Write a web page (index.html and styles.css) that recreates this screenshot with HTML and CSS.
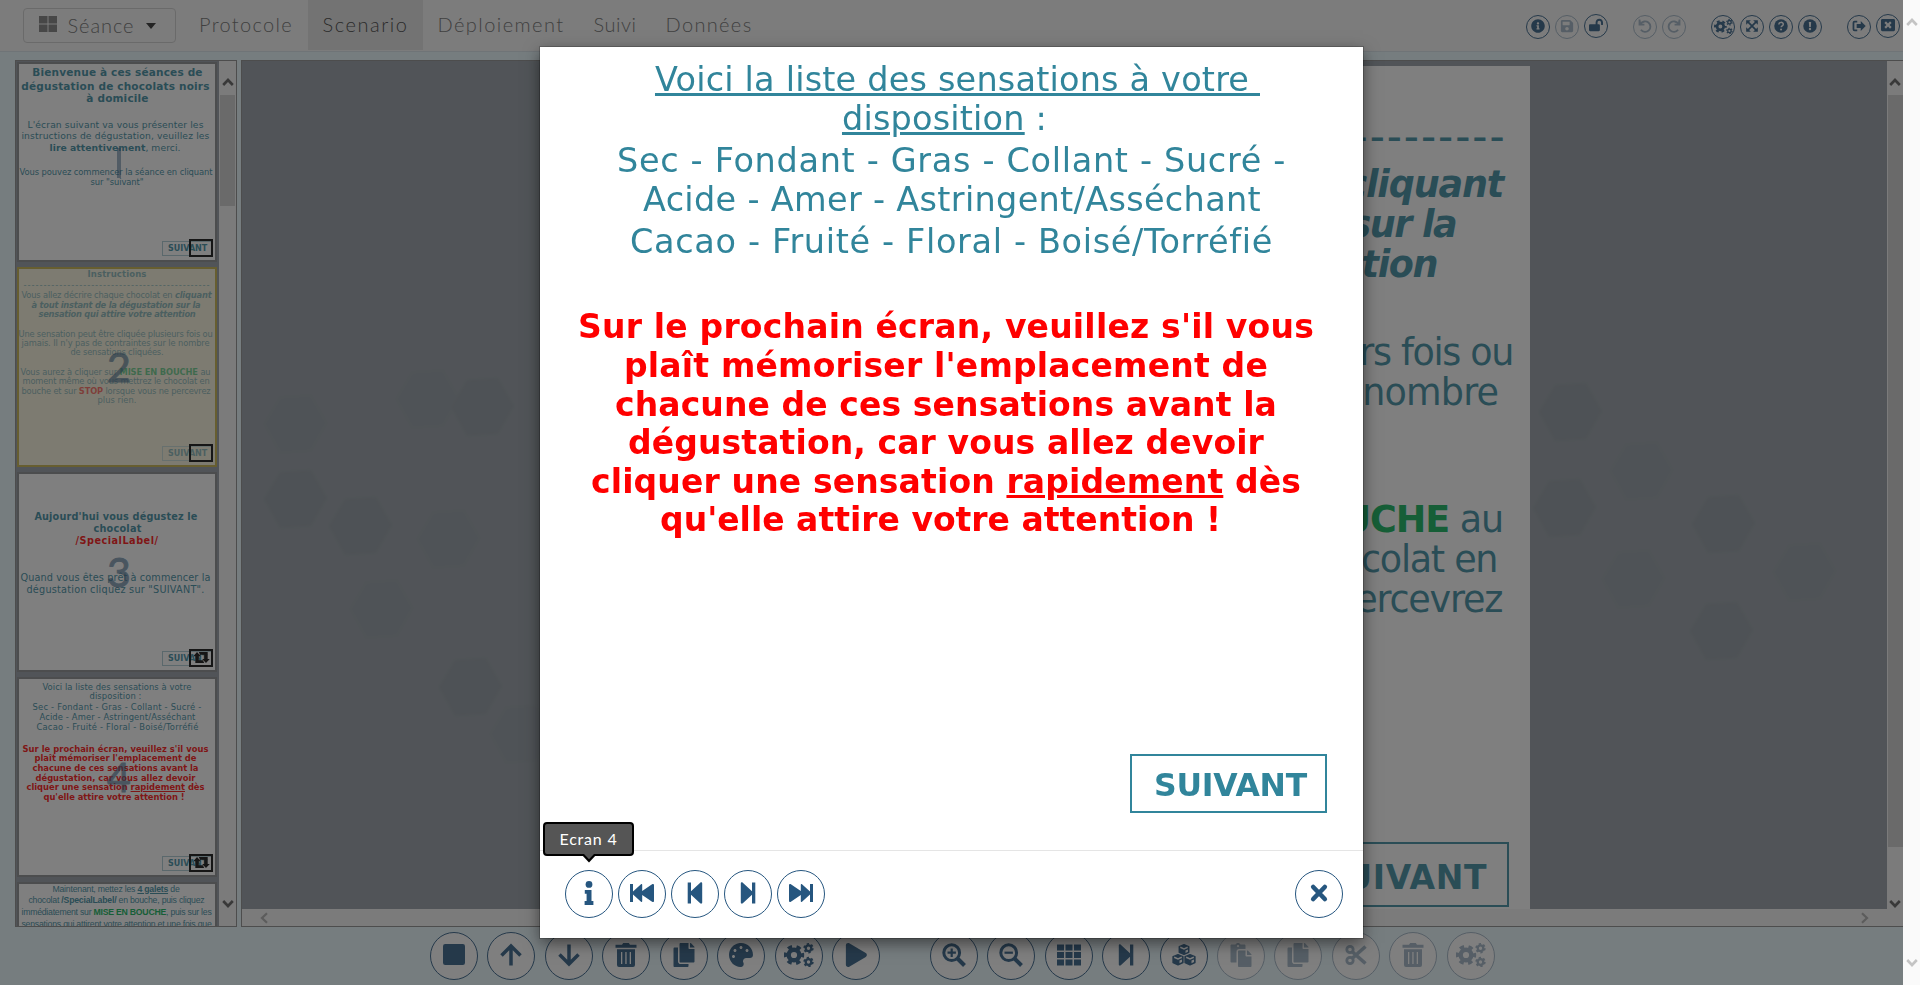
FILE: index.html
```html
<!DOCTYPE html>
<html lang="fr">
<head>
<meta charset="utf-8">
<title>Scenario</title>
<link rel="stylesheet" href="styles.css">
</head>
<body>
<svg class="defs" aria-hidden="true">
  <symbol id="info-circle" viewBox="0 0 512 512"><path d="M256 8C119.043 8 8 119.083 8 256c0 136.997 111.043 248 248 248s248-111.003 248-248C504 119.083 392.957 8 256 8zm0 110c23.196 0 42 18.804 42 42s-18.804 42-42 42-42-18.804-42-42 18.804-42 42-42zm56 254c0 6.627-5.373 12-12 12h-88c-6.627 0-12-5.373-12-12v-24c0-6.627 5.373-12 12-12h12v-64h-12c-6.627 0-12-5.373-12-12v-24c0-6.627 5.373-12 12-12h64c6.627 0 12 5.373 12 12v100h12c6.627 0 12 5.373 12 12v24z"/></symbol>
  <symbol id="save" viewBox="-32 0 512 512"><path d="M433.941 129.941l-83.882-83.882A48 48 0 0 0 316.118 32H48C21.49 32 0 53.49 0 80v352c0 26.51 21.49 48 48 48h352c26.51 0 48-21.49 48-48V163.882a48 48 0 0 0-14.059-33.941zM224 416c-35.346 0-64-28.654-64-64 0-35.346 28.654-64 64-64s64 28.654 64 64c0 35.346-28.654 64-64 64zm96-304.52V212c0 6.627-5.373 12-12 12H76c-6.627 0-12-5.373-12-12V108c0-6.627 5.373-12 12-12h228.52c3.183 0 6.235 1.264 8.485 3.515l3.48 3.48A11.996 11.996 0 0 1 320 111.48z"/></symbol>
  <symbol id="lock-open" viewBox="0 0 576 512"><path d="M423.5 0C339.5.3 272 69.5 272 153.5V224H48c-26.5 0-48 21.5-48 48v192c0 26.5 21.5 48 48 48h352c26.5 0 48-21.5 48-48V272c0-26.5-21.5-48-48-48h-48v-71.1c0-39.6 31.7-72.5 71.3-72.9 40-.4 72.7 32.1 72.7 72v80c0 13.3 10.7 24 24 24h32c13.3 0 24-10.7 24-24v-80C576 68 507.5-.3 423.5 0z"/></symbol>
  <symbol id="undo" viewBox="0 0 24 24"><path d="M4.500 8.500A9 9 0 1 1 5 18.500" fill="none" stroke="currentColor" stroke-width="3.200"/><path d="M1 1v10h10V8H5.500L4 1z"/></symbol>
  <symbol id="redo" viewBox="0 0 24 24"><path d="M19.500 8.500A9 9 0 1 0 19 18.500" fill="none" stroke="currentColor" stroke-width="3.200"/><path d="M23 1v10H13V8h5.500L20 1z"/></symbol>
  <symbol id="cogs" viewBox="0 0 30 24">
    <g fill="none" stroke="currentColor"><circle cx="10" cy="12" r="5.300" stroke-width="4.400"/><circle cx="10" cy="12" r="8.500" stroke-width="3.400" stroke-dasharray="4.450 4.450" stroke-dashoffset="2.200"/>
    <circle cx="24.500" cy="5.200" r="2.800" stroke-width="2.200"/><circle cx="24.500" cy="5.200" r="4.300" stroke-width="1.800" stroke-dasharray="2.250 2.250"/>
    <circle cx="24.500" cy="19" r="2.800" stroke-width="2.200"/><circle cx="24.500" cy="19" r="4.300" stroke-width="1.800" stroke-dasharray="2.250 2.250"/></g></symbol>
  <symbol id="expand" viewBox="0 0 24 24"><path d="M5 5l14 14M19 5L5 19" stroke="currentColor" stroke-width="3"/><path d="M2 2h8L2 10zM22 2v8l-8-8zM2 22v-8l8 8zM22 22h-8l8-8z"/></symbol>
  <symbol id="question" viewBox="0 0 24 24"><circle cx="12" cy="12" r="11.600"/><path d="M8.300 9.500c0-5 7.600-4.800 7.600-.6 0 2.800-3.700 2.700-3.700 5.300" fill="none" stroke="#fff" stroke-width="2.500"/><circle cx="12.100" cy="18" r="1.800" fill="#fff"/></symbol>
  <symbol id="exclamation" viewBox="0 0 24 24"><circle cx="12" cy="12" r="11.600"/><path d="M10 5h4l-.6 8.500h-2.800z" fill="#fff"/><circle cx="12" cy="17.200" r="2" fill="#fff"/></symbol>
  <symbol id="sign-out" viewBox="0 0 24 24"><path d="M9 4.500H4.500a2 2 0 0 0-2 2v11a2 2 0 0 0 2 2H9" fill="none" stroke="currentColor" stroke-width="3"/><path d="M15 3.500l8.500 8.500-8.500 8.500v-5H8v-7h7z"/></symbol>
  <symbol id="window-close" viewBox="0 0 512 512"><path d="M464 32H48C21.500 32 0 53.500 0 80v352c0 26.500 21.500 48 48 48h416c26.500 0 48-21.500 48-48V80c0-26.500-21.500-48-48-48zm-83.600 290.500c4.800 4.800 4.800 12.600 0 17.400l-40.500 40.500c-4.800 4.800-12.600 4.800-17.400 0L256 313.300l-66.500 67.100c-4.800 4.800-12.600 4.800-17.400 0l-40.500-40.500c-4.800-4.800-4.800-12.600 0-17.400l67.100-66.500-67.100-66.500c-4.800-4.800-4.800-12.600 0-17.400l40.500-40.500c4.800-4.800 12.600-4.800 17.400 0l66.500 67.100 66.500-67.100c4.800-4.800 12.600-4.800 17.400 0l40.500 40.500c4.800 4.800 4.800 12.600 0 17.400L313.300 256l67.100 66.500z"/></symbol>
  <symbol id="square" viewBox="0 0 24 24"><rect x="1" y="1" width="22" height="21" rx="2.200"/></symbol>
  <symbol id="arrow-up" viewBox="0 0 24 24"><path d="M12 22.500V4M2.500 12.500L12 3l9.500 9.500" fill="none" stroke="currentColor" stroke-width="3.500"/></symbol>
  <symbol id="arrow-down" viewBox="0 0 24 24"><path d="M12 1.500V20M2.500 11.500L12 21l9.500-9.500" fill="none" stroke="currentColor" stroke-width="3.500"/></symbol>
  <symbol id="trash" viewBox="0 0 24 24"><path d="M1.500 1.700H8L9.200 0h5.600L16 1.700h6.500v3h-21z"/><path fill-rule="evenodd" d="M3 6.200h18V22a2 2 0 0 1-2 2H5a2 2 0 0 1-2-2zM7 9v12h1.300V9zm4.300 0v12h1.300V9zm4.400 0v12H17V9z"/></symbol>
  <symbol id="copy" viewBox="-32 0 512 512"><path d="M320 448v40c0 13.255-10.745 24-24 24H24c-13.255 0-24-10.745-24-24V120c0-13.255 10.745-24 24-24h72v296c0 30.879 25.121 56 56 56h168zm0-344V0H152c-13.255 0-24 10.745-24 24v368c0 13.255 10.745 24 24 24h272c13.255 0 24-10.745 24-24V128H344c-13.200 0-24-10.800-24-24zm120.971-31.029L375.029 7.029A24 24 0 0 0 358.059 0H352v96h96v-6.059a24 24 0 0 0-7.029-16.970z"/></symbol>
  <symbol id="palette" viewBox="0 0 512 512"><path d="M204.300 5C104.900 24.400 24.800 104.300 5.200 203.400c-37 187 131.700 326.400 258.800 306.700 41.200-6.400 61.400-54.600 42.500-91.700-23.100-45.400 9.900-98.400 60.900-98.400h79.700c35.800 0 64.800-29.600 64.900-65.300C511.500 97.100 368.100-26.900 204.300 5zM96 320c-17.700 0-32-14.300-32-32s14.300-32 32-32 32 14.300 32 32-14.300 32-32 32zm32-128c-17.700 0-32-14.300-32-32s14.300-32 32-32 32 14.300 32 32-14.300 32-32 32zm128-64c-17.700 0-32-14.300-32-32s14.300-32 32-32 32 14.300 32 32-14.300 32-32 32zm128 64c-17.700 0-32-14.300-32-32s14.300-32 32-32 32 14.300 32 32-14.300 32-32 32z"/></symbol>
  <symbol id="play" viewBox="-40 0 512 512"><path d="M424.400 214.700L72.400 6.600C43.800-10.300 0 6.100 0 47.900V464c0 37.500 40.700 60.100 72.400 41.300l352-208c31.400-18.500 31.500-64.100 0-82.600z"/></symbol>
  <symbol id="zoom-in" viewBox="0 0 24 24"><circle cx="9.700" cy="9.700" r="7.900" fill="none" stroke="currentColor" stroke-width="3"/><path d="M15.500 15.500l7 7" stroke="currentColor" stroke-width="4"/><path d="M5.500 9.700h8.400M9.700 5.500v8.400" stroke="currentColor" stroke-width="2.200"/></symbol>
  <symbol id="zoom-out" viewBox="0 0 24 24"><circle cx="9.700" cy="9.700" r="7.900" fill="none" stroke="currentColor" stroke-width="3"/><path d="M15.500 15.500l7 7" stroke="currentColor" stroke-width="4"/><path d="M5.500 9.700h8.400" stroke="currentColor" stroke-width="2.200"/></symbol>
  <symbol id="grid" viewBox="0 0 24 24"><path d="M0 1.500h7v6H0zM8.500 1.500h7v6h-7zM17 1.500h7v6h-7zM0 9h7v6H0zM8.500 9h7v6h-7zM17 9h7v6h-7zM0 16.500h7v6H0zM8.500 16.500h7v6h-7zM17 16.500h7v6h-7z"/></symbol>
  <symbol id="step-next" viewBox="0 0 24 24"><path d="M4.800 2.500c0-1 1-1.700 2-.8L16 10.300V1.600h3.300v20.800H16v-8.700L6.800 22.300c-1 .9-2 .2-2-.8z"/></symbol>
  <symbol id="step-prev" viewBox="0 0 24 24"><path d="M19.200 2.500c0-1-1-1.700-2-.8L8 10.300V1.600H4.700v20.800H8v-8.700l9.200 8.600c1 .9 2 .2 2-.8z"/></symbol>
  <symbol id="first" viewBox="0 0 24 24"><path d="M0 3h3v7.500l8-7.300c.6-.5 1.200-.2 1.200.6v6.300l9.900-6.900c.9-.5 1.900-.2 1.900.6v16.400c0 .8-1 1.100-1.900.6l-9.900-6.900v6.300c0 .8-.6 1.100-1.200.6L3 13.500V21H0z"/></symbol>
  <symbol id="last" viewBox="0 0 24 24"><path d="M24 3h-3v7.500l-8-7.300c-.6-.5-1.200-.2-1.200.6v6.300L1.900 3.200C1 2.700 0 3 0 3.800v16.400c0 .8 1 1.100 1.900.6l9.900-6.900v6.300c0 .8.600 1.100 1.200.6l8-7.300V21h3z"/></symbol>
  <symbol id="cubes" viewBox="0 0 24 24"><g stroke="currentColor" stroke-width="1.500" stroke-linejoin="round"><path d="M12 1.800l4.700 2v5.400L12 11.400 7.300 9.200V3.800z"/><path d="M6 11.800l4.900 2v5.700L6 21.700l-4.900-2.200v-5.700zM18 11.800l4.900 2v5.700L18 21.700l-4.900-2.200v-5.700z"/></g><path d="M8.300 4.300L12 5.900l3.700-1.600M2.200 14.300L6 16l3.800-1.700M14.200 14.300L18 16l3.800-1.700" fill="none" stroke="#fff" stroke-width="1.500"/><path d="M13.500 7.500l2.500-1v2.200l-2.500 1.200zM7.500 17.600l2.500-1v2.400l-2.500 1.200zM19.500 17.600l2.500-1v2.400l-2.500 1.200z" fill="#fff"/></symbol>
  <symbol id="paste" viewBox="-32 0 512 512"><path d="M128 184c0-30.879 25.122-56 56-56h136V56c0-13.255-10.745-24-24-24h-80.610C204.306 12.890 183.637 0 160 0s-44.306 12.890-55.390 32H24C10.745 32 0 42.745 0 56v336c0 13.255 10.745 24 24 24h104V184zm32-144c13.255 0 24 10.745 24 24s-10.745 24-24 24-24-10.745-24-24 10.745-24 24-24zm184 248h104v200c0 13.255-10.745 24-24 24H184c-13.255 0-24-10.745-24-24V184c0-13.255 10.745-24 24-24h136v104c0 13.200 10.800 24 24 24zm104-38.059V256h-96v-96h6.059a24 24 0 0 1 16.970 7.029l65.941 65.941a24.002 24.002 0 0 1 7.030 16.971z"/></symbol>
  <symbol id="cut" viewBox="0 0 24 24"><g fill="none" stroke="currentColor"><circle cx="6" cy="6.500" r="3.200" stroke-width="2.800"/><circle cx="6" cy="17.500" r="3.200" stroke-width="2.800"/><path d="M8 8.500L21.500 20.500M8 15.500L21.500 3.500" stroke-width="3.600"/></g></symbol>
  <symbol id="info" viewBox="0 0 24 24"><circle cx="12" cy="3.400" r="3.400"/><path d="M7.800 9h6.700v11h1.900v4H7.600v-4h2v-7.200H7.800z"/></symbol>
  <symbol id="times" viewBox="0 0 24 24"><path d="M6.200 6l11.600 12M17.800 6L6.200 18" stroke="currentColor" stroke-width="4.600" stroke-linecap="round"/></symbol>
  <symbol id="retweet" viewBox="0 0 24 16"><path d="M0 6L5.500 0 11 6H8v6h6l2 4H3V6zM24 10L18.500 16 13 10h3V4h-6L8 0h13v10z"/></symbol>
  <symbol id="up" viewBox="0 0 12 10"><path d="M1.200 8L6 3l4.800 5" fill="none" stroke="currentColor" stroke-width="2.600"/></symbol>
  <symbol id="down" viewBox="0 0 12 10"><path d="M1.200 2L6 7l4.800-5" fill="none" stroke="currentColor" stroke-width="2.600"/></symbol>
  <symbol id="left" viewBox="0 0 10 12"><path d="M8 1.200L3 6l5 4.800" fill="none" stroke="currentColor" stroke-width="2.200"/></symbol>
  <symbol id="right" viewBox="0 0 10 12"><path d="M2 1.200L7 6l-5 4.800" fill="none" stroke="currentColor" stroke-width="2.200"/></symbol>
</svg>

<div class="screen">
<div class="app">
  <header class="navbar">
    <div class="session"><svg viewBox="0 0 18 16"><path d="M0 0h8.500v7.500H0zM9.500 0H18v7.500H9.500zM0 8.500h8.500V16H0zM9.500 8.500H18V16H9.500z"/></svg><span data-fit="67">Séance</span><i class="caret"></i></div>
    <nav class="menu">
      <a class="m1"><span data-fit="94">Protocole</span></a><a class="m2 active"><span data-fit="86">Scenario</span></a><a class="m3"><span data-fit="127">Déploiement</span></a><a class="m4"><span data-fit="43">Suivi</span></a><a class="m5"><span data-fit="87">Données</span></a>
    </nav>
    <div class="tools">
      <div class="set"><b class="sm"><svg><use href="#info-circle"/></svg></b><b class="sm off"><svg><use href="#save"/></svg></b><b class="sm up1"><svg><use href="#lock-open"/></svg></b></div>
      <div class="set"><b class="sm off"><svg><use href="#undo"/></svg></b><b class="sm off"><svg><use href="#redo"/></svg></b></div>
      <div class="set"><b class="sm wide"><svg><use href="#cogs"/></svg></b><b class="sm"><svg><use href="#expand"/></svg></b><b class="sm"><svg><use href="#question"/></svg></b><b class="sm"><svg><use href="#exclamation"/></svg></b></div>
      <div class="set"><b class="sm"><svg><use href="#sign-out"/></svg></b><b class="sm up1"><svg><use href="#window-close"/></svg></b></div>
    </div>
  </header>

  <main class="work">
    <aside class="thumbs">
      <div class="list">
        <section class="thumb" data-y="64" data-x="19">
          <div class="lines">
            <p class="b" data-s="10.5" data-p="76 33 202">Bienvenue à ces séances de</p>
            <p class="b" data-s="10.5" data-p="90 22 209">dégustation de chocolats noirs</p>
            <p class="b" data-s="10.5" data-p="102 87 148">à domicile</p>
            <p data-s="9.2" data-p="128 28 203">L'écran suivant va vous présenter les</p>
            <p data-s="9.2" data-p="139 22 209">instructions de dégustation, veuillez les</p>
            <p data-s="9.2" data-p="151 50 180"><b>lire attentivement</b>, merci.</p>
            <p data-s="8.4" data-p="175 20 212">Vous pouvez commencer la séance en cliquant</p>
            <p data-s="8.4" data-p="185 91 143">sur "suivant"</p>
          </div>
          <i class="num bar"></i><span class="next">SUIVANT</span><span class="jump"></span>
        </section>
        <section class="thumb sel" data-y="269" data-x="19">
          <div class="lines">
            <p class="b" data-s="8.5" data-p="277 88 146">Instructions</p>
            <p data-s="8.5" data-p="288 24 210">-----------------------------------------------</p>
            <p data-s="8.3" data-p="298 22 211">Vous allez décrire chaque chocolat en <b><em>cliquant</em></b></p>
            <p class="b" data-s="8.3" data-p="308 32 200"><em>à tout instant de la dégustation sur la</em></p>
            <p class="b" data-s="8.3" data-p="317 39 195"><em>sensation qui attire votre attention</em></p>
            <p data-s="8.3" data-p="337 19 212">Une sensation peut être cliquée plusieurs fois ou</p>
            <p data-s="8.3" data-p="346 22 209">jamais. Il n'y pas de contraintes sur le nombre</p>
            <p data-s="8.3" data-p="355 71 163">de sensations cliquées.</p>
            <p data-s="8.3" data-p="375 21 210">Vous aurez à cliquer sur <b class="green">MISE EN BOUCHE</b> au</p>
            <p data-s="8.3" data-p="384 23 209">moment même où vous mettrez le chocolat en</p>
            <p data-s="8.3" data-p="394 22 210">bouche et sur <b class="red">STOP</b> lorsque vous ne percevrez</p>
            <p data-s="8.3" data-p="403 98 136">plus rien.</p>
          </div>
          <i class="num">2</i><span class="next">SUIVANT</span><span class="jump"></span>
        </section>
        <section class="thumb" data-y="474" data-x="19">
          <div class="lines">
            <p class="b" data-s="9.7" data-p="520 35 197">Aujourd'hui vous dégustez le</p>
            <p class="b" data-s="9.7" data-p="532 94 141">chocolat</p>
            <p class="b red" data-s="9.7" data-p="544 76 158">/SpecialLabel/</p>
            <p data-s="9.7" data-p="581 21 210">Quand vous êtes prêt à commencer la</p>
            <p data-s="9.7" data-p="593 27 204">dégustation cliquez sur "SUIVANT".</p>
          </div>
          <i class="num">3</i><span class="next">SUIVANT</span><span class="jump"><svg><use href="#retweet"/></svg></span>
        </section>
        <section class="thumb" data-y="679" data-x="19">
          <div class="lines">
            <p data-s="8.4" data-p="690 43 191">Voici la liste des sensations à votre</p>
            <p data-s="8.4" data-p="699 90 141">disposition :</p>
            <p data-s="8.4" data-p="710 33 201">Sec - Fondant - Gras - Collant - Sucré -</p>
            <p data-s="8.4" data-p="720 40 195">Acide - Amer - Astringent/Asséchant</p>
            <p data-s="8.4" data-p="730 37 198">Cacao - Fruité - Floral - Boisé/Torréfié</p>
            <p class="b red" data-s="8.4" data-p="752 23 208">Sur le prochain écran, veuillez s'il vous</p>
            <p class="b red" data-s="8.4" data-p="761 35 196">plaît mémoriser l'emplacement de</p>
            <p class="b red" data-s="8.4" data-p="771 33 198">chacune de ces sensations avant la</p>
            <p class="b red" data-s="8.4" data-p="781 36 195">dégustation, car vous allez devoir</p>
            <p class="b red" data-s="8.4" data-p="790 27 204">cliquer une sensation <u>rapidement</u> dès</p>
            <p class="b red" data-s="8.4" data-p="800 44 184">qu'elle attire votre attention !</p>
          </div>
          <i class="num">4</i><span class="next">SUIVANT</span><span class="jump"><svg><use href="#retweet"/></svg></span>
        </section>
        <section class="thumb arial" data-y="884" data-x="19">
          <div class="lines">
            <p data-s="8.7" data-p="892 53 179">Maintenant, mettez les <b><u>4 galets</u></b> de</p>
            <p data-s="8.7" data-p="903 29 204">chocolat <b>/SpecialLabel/</b> en bouche, puis cliquez</p>
            <p data-s="8.7" data-p="915 22 211">immédiatement sur <b class="green">MISE EN BOUCHE</b>, puis sur les</p>
            <p data-s="8.7" data-p="927 22 211">sensations qui attirent votre attention et une fois que</p>
          </div>
        </section>
      </div>
      <div class="vbar"><svg class="chev"><use href="#up"/></svg><i class="grip short"></i><svg class="chev low"><use href="#down"/></svg></div>
    </aside>

    <section class="stage">
      <div class="view">
        <div class="canvas">
          <svg class="hexes" viewBox="241 61 1646 848"><defs><path id="hx" d="M-15-28l31-2 16 28-16 28-31 2-16-29z"/></defs>
            <use href="#hx" x="1569" y="413"/><use href="#hx" x="1722" y="525"/><use href="#hx" x="1720" y="632"/><use href="#hx" x="1563" y="509"/><g opacity=".4"><use href="#hx" x="1640" y="472"/><use href="#hx" x="1632" y="580"/><use href="#hx" x="1803" y="573"/></g>
            <use href="#hx" x="481" y="408"/><use href="#hx" x="469" y="688"/><use href="#hx" x="359" y="527"/><use href="#hx" x="294" y="500"/><g opacity=".4"><use href="#hx" x="294" y="425"/><use href="#hx" x="426" y="400"/><use href="#hx" x="447" y="540"/><use href="#hx" x="520" y="735"/><use href="#hx" x="380" y="610"/></g></svg>
          <div class="slide" data-y="66" data-x="687">
            <div class="lines">
              <p class="b" data-s="36" data-p="102 1000 1216">Instructions</p>
              <p data-s="42" data-p="152 705 1504">-----------------------------------------------</p>
              <p data-s="36.500" data-p="198 688 1501">Vous allez décrire chaque chocolat en <b><em>cliquant</em></b></p>
              <p class="b" data-s="36.500" data-p="238 732 1454"><em>à tout instant de la dégustation sur la</em></p>
              <p class="b" data-s="36.500" data-p="278 758 1435"><em>sensation qui attire votre attention</em></p>
              <p data-s="36.500" data-p="366 687 1511">Une sensation peut être cliquée plusieurs fois ou</p>
              <p data-s="36.500" data-p="406 692 1496">jamais. Il n'y pas de contraintes sur le nombre</p>
              <p data-s="36.500" data-p="446 909 1305">de sensations cliquées.</p>
              <p data-s="36.500" data-p="533 690 1501">Vous aurez à cliquer sur <b class="green">MISE EN BOUCHE</b> au</p>
              <p data-s="36.500" data-p="573 696 1495">moment même où vous mettrez le chocolat en</p>
              <p data-s="36.500" data-p="613 692 1500">bouche et sur <b class="red">STOP</b> lorsque vous ne percevrez</p>
            </div>
            <div class="go big"><span data-fit="166">SUIVANT</span></div>
          </div>
        </div>
        <div class="hbar"><svg><use href="#left"/></svg><svg><use href="#right"/></svg></div>
      </div>
      <div class="vbar"><svg class="chev"><use href="#up"/></svg><i class="grip tall"></i><svg class="chev low"><use href="#down"/></svg></div>
    </section>
  </main>

  <footer class="actions">
    <div class="row"><b class="rd"><svg><use href="#square"/></svg></b><b class="rd"><svg><use href="#arrow-up"/></svg></b><b class="rd"><svg><use href="#arrow-down"/></svg></b><b class="rd"><svg><use href="#trash"/></svg></b><b class="rd"><svg><use href="#copy"/></svg></b><b class="rd"><svg><use href="#palette"/></svg></b><b class="rd wide"><svg><use href="#cogs"/></svg></b><b class="rd"><svg><use href="#play"/></svg></b></div>
    <div class="row"><b class="rd"><svg><use href="#zoom-in"/></svg></b><b class="rd"><svg><use href="#zoom-out"/></svg></b><b class="rd"><svg><use href="#grid"/></svg></b><b class="rd"><svg><use href="#step-next"/></svg></b><b class="rd"><svg><use href="#cubes"/></svg></b><b class="rd off"><svg><use href="#paste"/></svg></b><b class="rd off"><svg><use href="#copy"/></svg></b><b class="rd off"><svg><use href="#cut"/></svg></b><b class="rd off"><svg><use href="#trash"/></svg></b><b class="rd wide off"><svg><use href="#cogs"/></svg></b></div>
  </footer>
</div>
<div class="pagebar"><svg><use href="#up"/></svg><svg><use href="#down"/></svg></div>

<div class="backdrop">
  <div class="modal">
    <div class="body" data-y="47" data-x="540">
      <div class="lines">
        <p data-s="33.500" data-p="91.700 657 1258"><u>Voici la liste des sensations à votre&nbsp;</u></p>
        <p data-s="33.500" data-p="130.700 844 1045"><u>disposition</u> :</p>
        <p data-s="33.500" data-p="172.700 619 1284">Sec - Fondant - Gras - Collant - Sucré -</p>
        <p data-s="33.500" data-p="211.700 645 1259">Acide - Amer - Astringent/Asséchant</p>
        <p data-s="33.500" data-p="253.700 632 1271">Cacao - Fruité - Floral - Boisé/Torréfié</p>
        <p class="b red" data-s="33" data-p="338.200 580 1312">Sur le prochain écran, veuillez s'il vous</p>
        <p class="b red" data-s="33" data-p="377.200 626 1266">plaît mémoriser l'emplacement de</p>
        <p class="b red" data-s="33" data-p="416 617 1275">chacune de ces sensations avant la</p>
        <p class="b red" data-s="33" data-p="454.200 630 1262">dégustation, car vous allez devoir</p>
        <p class="b red" data-s="33" data-p="493 593 1299">cliquer une sensation <u>rapidement</u> dès</p>
        <p class="b red" data-s="33" data-p="531.200 662 1219">qu'elle attire votre attention !</p>
      </div>
      <div class="go"><span data-fit="153">SUIVANT</span></div>
    </div>
    <div class="foot">
      <div class="ctl"><b class="rd"><svg><use href="#info"/></svg><span class="tip"><span data-fit="58">Ecran 4</span><svg class="nib" viewBox="0 0 16 9"><path d="M0 0l8 8.500L16 0z"/><path class="in" d="M3 0l5 5.300L13 0z"/></svg></span></b><b class="rd"><svg><use href="#first"/></svg></b><b class="rd"><svg><use href="#step-prev"/></svg></b><b class="rd"><svg><use href="#step-next"/></svg></b><b class="rd"><svg><use href="#last"/></svg></b></div>
      <b class="rd"><svg><use href="#times"/></svg></b>
    </div>
  </div>
</div>
</div>
<script src="fit.js"></script>
</body>
</html>
```
FILE: styles.css
```css
* { box-sizing: border-box; }
html { height: 985px; overflow: hidden; }
body { margin: 0; height: 985px; overflow: hidden; font-family: Lato, "Open Sans", sans-serif; }
.defs { position: absolute; width: 0; height: 0; }
svg { fill: currentColor; display: block; }
.screen { position: relative; display: flex; width: 1920px; height: 985px; overflow: hidden; }
.app { width: 1903px; height: 985px; display: flex; flex-direction: column; background: #e9f9ff; }

.navbar { height: 52px; flex: none; display: flex; background: #f8f8f8; border-bottom: 1px solid #d8e4ec; font-size: 20px; font-weight: 300; color: #666; }
.session { width: 153px; height: 35px; margin: 8px 8px 0 22.500px; border: 1px solid #ccc; border-radius: 4px; display: flex; align-items: center; padding: 0 0 2px 15px; }
.session svg { width: 18px; height: 16px; margin-right: 11px; margin-top: -1px; color: #777; }
.caret { border: 5px solid transparent; border-top: 6px solid #222; border-bottom: 0; margin: 3px 0 0 11px; }
[data-fit] { display: inline-block; white-space: nowrap; }
.menu { display: flex; height: 50px; }
.menu a { display: flex; align-items: center; justify-content: center; padding: 0 0 2px 1px; }
.m1 { width: 124px; }
.m2 { width: 115px; }
.m3 { width: 156px; }
.m4 { width: 72px; }
.m5 { width: 116px; }
.menu .active { background: #e2e2e2; color: #333; }
.tools { display: flex; gap: 25px; margin: 15px 3px 0 auto; color: #26567f; }
.set { display: flex; gap: 5px; }
.sm { width: 24px; height: 24px; border: 1px solid currentColor; border-radius: 50%; display: flex; align-items: center; justify-content: center; }
.sm svg { width: 14px; height: 14px; margin-top: -2px; }
.sm.wide svg { width: 19px; height: 15px; }
.up1 { margin-top: -1px; }
.off { color: #9bb0c2; }

.work { display: flex; gap: 4px; height: 867px; margin: 8px 0 0 15px; flex: none; }
.thumbs { width: 222px; display: flex; background: #8f98a0; border: 1px solid #878787; overflow: hidden; }
.list { width: 203px; padding: 1px 0 0 1px; display: flex; flex-direction: column; gap: 5px; }
.thumb { position: relative; flex: none; width: 200px; height: 200px; background: #fff; border: 2px solid #838689; color: #31859b; overflow: hidden; }
.thumb.sel { background: #faf6dc; border-color: #c4b040; }
.thumb.sel .lines, .thumb.sel .next { opacity: .6; }
.lines { display: flow-root; font-family: Verdana, "DejaVu Sans", sans-serif; color: #31859b; }
.lines p { margin: 0; white-space: pre; width: max-content; }
.arial .lines { font-family: "Liberation Sans", Arial, sans-serif; }
.lines .b, .lines b { font-weight: 700; }
.lines .red, .red { color: #f00; }
.green { color: #00b050; }
.num { position: absolute; left: 86px; top: 76px; width: 28px; text-align: center; font: 400 41px/44px Lato, sans-serif; color: #26567f; opacity: .6; -webkit-text-stroke: 1px #26567f; }
.num.bar { left: 98px; top: 84px; width: 4px; height: 30px; background: #26567f; opacity: .5; }
.next { position: absolute; left: 143px; top: 177px; width: 50px; height: 15px; border: 1px solid #a5c8d2; padding-left: 5px; font: 700 8px/14px "DejaVu Sans", sans-serif; color: #31859b; }
.jump { position: absolute; left: 170px; top: 175px; width: 24px; height: 18px; border: 2.500px solid #000; color: #000; }
.jump svg { width: 17px; height: 11px; margin: 1px 0 0 1.500px; }
.vbar { width: 17px; background: #f4f4f4; display: flex; flex-direction: column; align-items: center; color: #555; }
.chev { width: 12px; height: 10px; margin: 16px 0 8px; flex: none; }
.chev.low { margin: auto 0 17px; }
.grip { width: 15px; background: #cdcdcd; }
.short { height: 111px; }
.tall { height: 752px; }
.stage { flex: 1; display: flex; border: 1px solid #878787; border-right: 0; overflow: hidden; }
.view { width: 1645px; flex: none; }
.canvas { position: relative; height: 848px; background: #8f98a0; padding: 5px 0 0 445px; overflow: hidden; }
.hexes { position: absolute; left: 0; top: 0; width: 1646px; height: 848px; color: #3c4a52; opacity: .06; filter: blur(1px); }
.slide { position: relative; width: 843px; height: 843px; background: #fff; color: #31859b; overflow: hidden; }
.go { position: absolute; right: 36px; top: 707px; width: 197px; height: 59px; border: 2px solid #31859b; color: #31859b; display: flex; align-items: center; padding: 5px 0 0 22px; font: 700 31.500px/1 "DejaVu Sans", sans-serif; }
.go.big { right: 21px; top: 776px; width: 220px; height: 65px; font-size: 33px; padding: 5px 0 0 30px; }
.hbar { height: 17px; background: #f4f4f4; display: flex; align-items: center; justify-content: space-between; padding: 0 17px; color: #aaa; }
.hbar svg { width: 10px; height: 12px; }

.actions { flex: 1; display: flex; gap: 50px; padding: 5px 0 0 430px; color: #26567f; }
.row { display: flex; gap: 9.430px; }
.rd { position: relative; flex: none; width: 48px; height: 48px; border: 1px solid currentColor; border-radius: 50%; background: #fff; display: flex; align-items: center; justify-content: center; font-weight: 400; }
.rd > svg { width: 24px; height: 24px; margin-top: -2px; }
.rd.wide > svg { width: 30px; height: 24px; }

.pagebar { width: 17px; background: #fafafa; color: #c4c4c4; display: flex; flex-direction: column; justify-content: space-between; align-items: center; padding: 17px 0; }
.pagebar svg { width: 12px; height: 10px; }

.backdrop { position: absolute; left: 0; top: 0; width: 1903px; height: 985px; background: rgba(38, 38, 38, .59); }
.modal { width: 823px; height: 891px; margin: 47px 0 0 540px; background: #fff; box-shadow: 0 0 0 1px rgba(0, 0, 0, .2), 0 5px 15px rgba(0, 0, 0, .5); display: flex; flex-direction: column; }
.body { position: relative; height: 803px; }
.foot { flex: 1; border-top: 1px solid #e5e5e5; display: flex; justify-content: space-between; padding: 19px 20px 0 25px; color: #26567f; }
.ctl { display: flex; gap: 5px; }
.tip { position: absolute; left: -23px; top: -49px; width: 91px; height: 34px; border: 2px solid #000; border-radius: 4px; background: #555; color: #fff; font-size: 16px; font-weight: 400; line-height: 30px; text-align: center; }
.nib { position: absolute; left: 36px; top: 30px; width: 16px; height: 9px; color: #000; }
.nib .in { fill: #555; }
```
FILE: fit.js
```js
// Spreads a text run over the given advance width.
function spread(el, width) {
  const now = el.getBoundingClientRect().width;
  el.style.letterSpacing = (width - now) / el.textContent.length + 'px';
}

document.querySelectorAll('[data-fit]').forEach(el => spread(el, +el.dataset.fit));

// Stacks slide lines on their baselines: data-p = "baseline left right", data-s = font size.
document.querySelectorAll('[data-y]').forEach(slide => {
  const x = +slide.dataset.x;
  let bottom = +slide.dataset.y;
  slide.querySelectorAll('.lines p').forEach(p => {
    const s = +p.dataset.s;
    const [base, left, right] = p.dataset.p.split(' ').map(Number);
    const top = base - 0.846 * s;
    p.style.fontSize = p.style.lineHeight = s + 'px';
    p.style.height = s + 'px';
    p.style.marginTop = top - bottom + 'px';
    p.style.marginLeft = left - x - 0.06 * s + 'px';
    spread(p, right - left + 0.12 * s);
    bottom = top + s;
  });
});
```
